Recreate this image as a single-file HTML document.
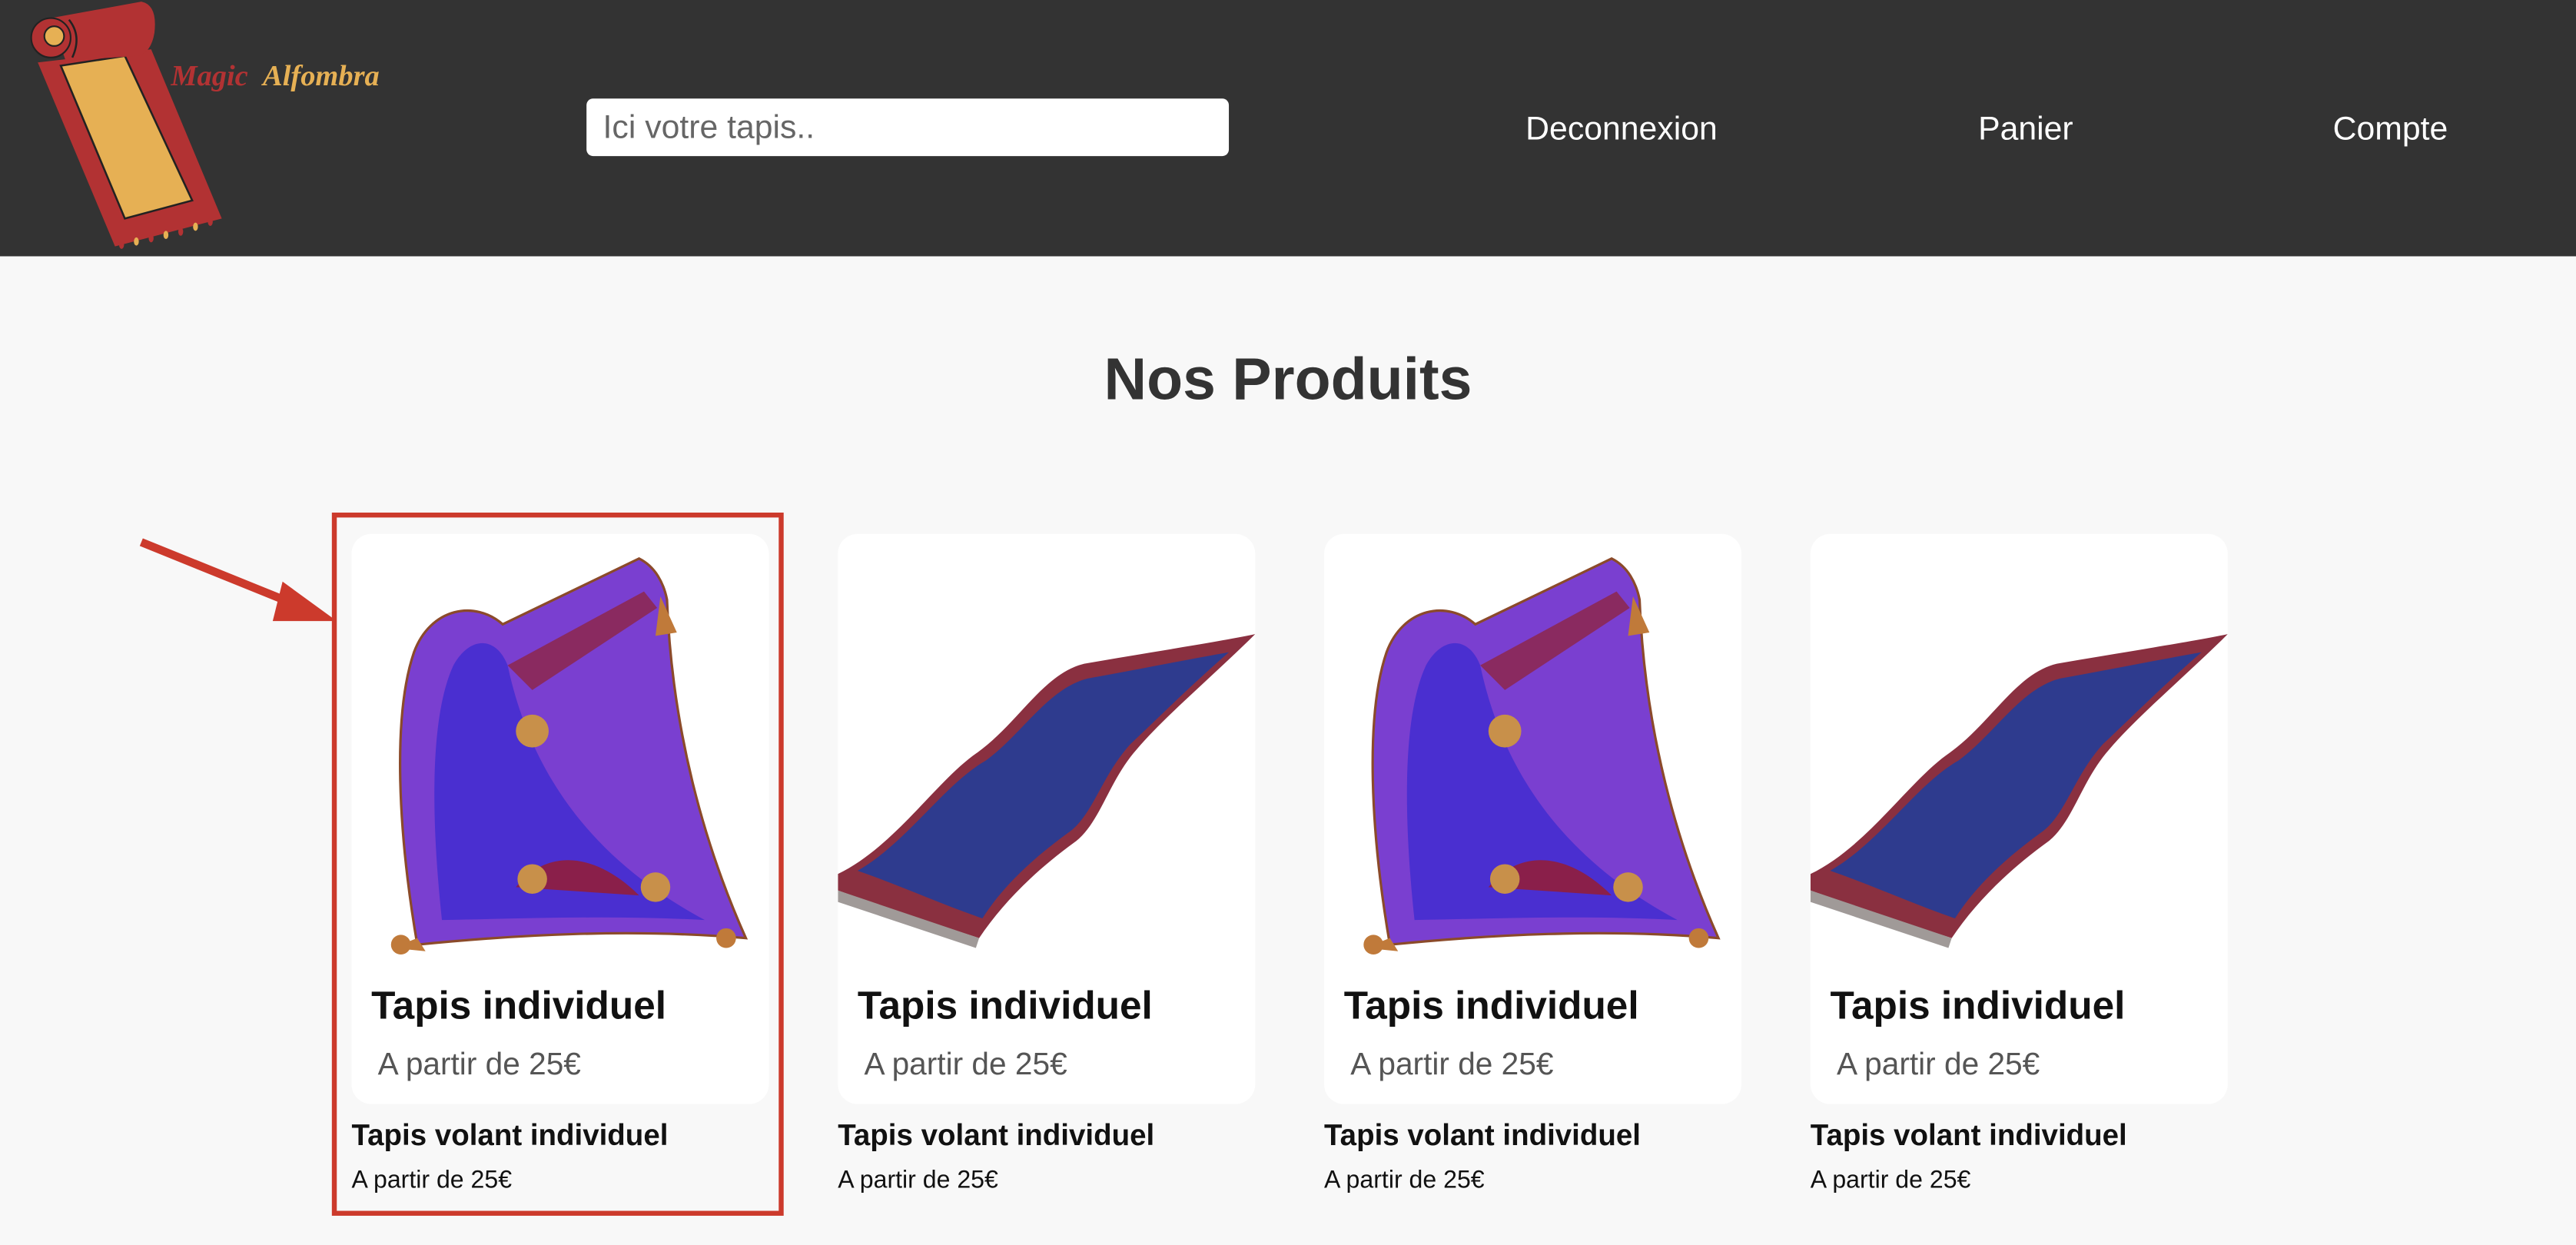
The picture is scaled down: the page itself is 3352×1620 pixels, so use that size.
<!DOCTYPE html>
<html><head><meta charset="utf-8"><style>
html,body{margin:0;padding:0;width:3352px;height:1620px;overflow:hidden;background:#f8f8f8;}
#w{position:absolute;left:0;top:0;width:1568px;height:758px;transform:scale(2.13776);transform-origin:0 0;font-family:"Liberation Sans",sans-serif;}
.hdr{position:absolute;left:0;top:0;width:1568px;height:156px;background:#333;}
.search{position:absolute;left:357px;top:60px;width:391px;height:35px;background:#fff;border-radius:4px;}
.search span{position:absolute;left:10px;top:7px;font-size:20px;color:#666;}
.nav{position:absolute;top:68px;color:#fff;font-size:20px;transform:translateX(-50%);white-space:nowrap;}
h1{position:absolute;left:0;width:1568px;top:210px;margin:0;text-align:center;font-size:36px;font-weight:bold;color:#333;}
.card{position:absolute;top:325px;width:254px;height:347px;background:#fff;border-radius:12px;overflow:hidden;}
.card svg{position:absolute;left:0;top:0;}
.t1{position:absolute;left:12px;top:274px;font-size:24px;font-weight:bold;color:#111;}
.t2{position:absolute;left:16px;top:313px;font-size:19px;color:#555;}
.c1{position:absolute;top:681px;font-size:18px;font-weight:bold;color:#111;white-space:nowrap;}
.c2{position:absolute;top:710px;font-size:15px;color:#111;white-space:nowrap;}
.box{position:absolute;left:202px;top:312px;width:269px;height:422px;border:3px solid #cc3a2c;}
</style></head><body><div id="w">
<div class="hdr">
<svg width="250" height="156" style="position:absolute;left:0;top:0">
<polygon points="23,38 92,30 135,133 70,150" fill="#b23233"/>
<polygon points="37,40 76,34 117,122 76,133" fill="#e6b054" stroke="#222" stroke-width="1.2"/>
<path d="M31,11 L86,1 Q96,3 94,20 Q92,32 84,34 L40,37 Z" fill="#b23233"/>
<path d="M44,35 Q50,22 42,12" fill="none" stroke="#222" stroke-width="1.2"/>
<circle cx="31" cy="23" r="12" fill="#b23233" stroke="#222" stroke-width="1"/>
<circle cx="33" cy="22" r="6" fill="#e6b054" stroke="#222" stroke-width="1"/>
<g fill="#e6b054"><ellipse cx="74" cy="149" rx="1.5" ry="2.5" fill="#b23233"/><ellipse cx="83" cy="147" rx="1.5" ry="2.5"/><ellipse cx="92" cy="145" rx="1.5" ry="2.5" fill="#b23233"/><ellipse cx="101" cy="143" rx="1.5" ry="2.5"/><ellipse cx="110" cy="141" rx="1.5" ry="2.5" fill="#b23233"/><ellipse cx="119" cy="138" rx="1.5" ry="2.5"/><ellipse cx="128" cy="135" rx="1.5" ry="2.5" fill="#b23233"/></g>
<text x="104" y="52" font-family="Liberation Serif,serif" font-style="italic" font-weight="bold" font-size="18" fill="#b23233">Magic</text>
<text x="160" y="52" font-family="Liberation Serif,serif" font-style="italic" font-weight="bold" font-size="18" fill="#e6b054">Alfombra</text>
</svg>
<div class="search"><span>Ici votre tapis..</span></div>
<div class="nav" style="left:987px">Deconnexion</div>
<div class="nav" style="left:1233px">Panier</div>
<div class="nav" style="left:1455px">Compte</div>
</div>
<h1>Nos Produits</h1>
<svg width="140" height="70" style="position:absolute;left:80px;top:320px">
<line x1="6" y1="10" x2="100" y2="48" stroke="#cc3a2c" stroke-width="5"/>
<polygon points="92,34 125,58 86,58" fill="#cc3a2c"/>
</svg>
<div class="box"></div>

<div class="card" style="left:214px">
<svg width="254" height="260"><g>
<path d="M40,250 C28,180 25,110 38,72 C48,45 75,40 92,55 L175,15 C185,20 190,30 192,40 C195,120 215,190 240,246 C170,240 100,244 40,250 Z" fill="#7a3fd0" stroke="#8b4a2a" stroke-width="1.5"/>
<path d="M55,235 C48,170 48,110 62,80 C72,62 88,62 95,80 C110,150 150,200 215,235 C160,232 110,234 55,235 Z" fill="#4a2fd0"/>
<path d="M95,80 L178,35 L186,45 L110,95 Z" fill="#8a2a60"/>
<path d="M100,215 C120,190 150,195 175,220 Z" fill="#8a1f4a"/>
<circle cx="110" cy="120" r="10" fill="#c8904a"/><circle cx="110" cy="210" r="9" fill="#c8904a"/><circle cx="185" cy="215" r="9" fill="#c8904a"/>
<path d="M25,252 L40,246 L45,254 Z" fill="#c07a3a"/><circle cx="30" cy="250" r="6" fill="#c07a3a"/>
<circle cx="228" cy="246" r="6" fill="#c07a3a"/><path d="M188,38 L198,60 L185,62 Z" fill="#c07a3a"/>
</g></svg>
<div class="t1">Tapis individuel</div><div class="t2">A partir de 25€</div>
</div>
<div class="c1" style="left:214px">Tapis volant individuel</div><div class="c2" style="left:214px">A partir de 25€</div>

<div class="card" style="left:510px">
<svg width="254" height="260">
<path d="M0,207 C35,190 60,150 85,133 C110,115 125,85 150,79 C190,72 230,66 254,61 C230,85 200,110 182,131 C165,150 160,175 145,187 C120,205 100,225 86,246 C55,236 25,226 0,217 Z" fill="#8a3040"/>
<path d="M12,205 C42,188 65,152 90,138 C112,122 128,94 152,88 C185,82 215,76 238,72 C215,92 195,112 178,128 C160,148 155,172 140,182 C118,198 100,215 88,234 C62,225 38,214 12,205 Z" fill="#2e3b8e"/>
<path d="M0,217 L86,246 L84,252 L0,224 Z" fill="#a09a98"/>
</svg>
<div class="t1">Tapis individuel</div><div class="t2">A partir de 25€</div>
</div>
<div class="c1" style="left:510px">Tapis volant individuel</div><div class="c2" style="left:510px">A partir de 25€</div>

<div class="card" style="left:806px">
<svg width="254" height="260"><g>
<path d="M40,250 C28,180 25,110 38,72 C48,45 75,40 92,55 L175,15 C185,20 190,30 192,40 C195,120 215,190 240,246 C170,240 100,244 40,250 Z" fill="#7a3fd0" stroke="#8b4a2a" stroke-width="1.5"/>
<path d="M55,235 C48,170 48,110 62,80 C72,62 88,62 95,80 C110,150 150,200 215,235 C160,232 110,234 55,235 Z" fill="#4a2fd0"/>
<path d="M95,80 L178,35 L186,45 L110,95 Z" fill="#8a2a60"/>
<path d="M100,215 C120,190 150,195 175,220 Z" fill="#8a1f4a"/>
<circle cx="110" cy="120" r="10" fill="#c8904a"/><circle cx="110" cy="210" r="9" fill="#c8904a"/><circle cx="185" cy="215" r="9" fill="#c8904a"/>
<path d="M25,252 L40,246 L45,254 Z" fill="#c07a3a"/><circle cx="30" cy="250" r="6" fill="#c07a3a"/>
<circle cx="228" cy="246" r="6" fill="#c07a3a"/><path d="M188,38 L198,60 L185,62 Z" fill="#c07a3a"/>
</g></svg>
<div class="t1">Tapis individuel</div><div class="t2">A partir de 25€</div>
</div>
<div class="c1" style="left:806px">Tapis volant individuel</div><div class="c2" style="left:806px">A partir de 25€</div>

<div class="card" style="left:1102px">
<svg width="254" height="260">
<path d="M0,207 C35,190 60,150 85,133 C110,115 125,85 150,79 C190,72 230,66 254,61 C230,85 200,110 182,131 C165,150 160,175 145,187 C120,205 100,225 86,246 C55,236 25,226 0,217 Z" fill="#8a3040"/>
<path d="M12,205 C42,188 65,152 90,138 C112,122 128,94 152,88 C185,82 215,76 238,72 C215,92 195,112 178,128 C160,148 155,172 140,182 C118,198 100,215 88,234 C62,225 38,214 12,205 Z" fill="#2e3b8e"/>
<path d="M0,217 L86,246 L84,252 L0,224 Z" fill="#a09a98"/>
</svg>
<div class="t1">Tapis individuel</div><div class="t2">A partir de 25€</div>
</div>
<div class="c1" style="left:1102px">Tapis volant individuel</div><div class="c2" style="left:1102px">A partir de 25€</div>
</div></body></html>
